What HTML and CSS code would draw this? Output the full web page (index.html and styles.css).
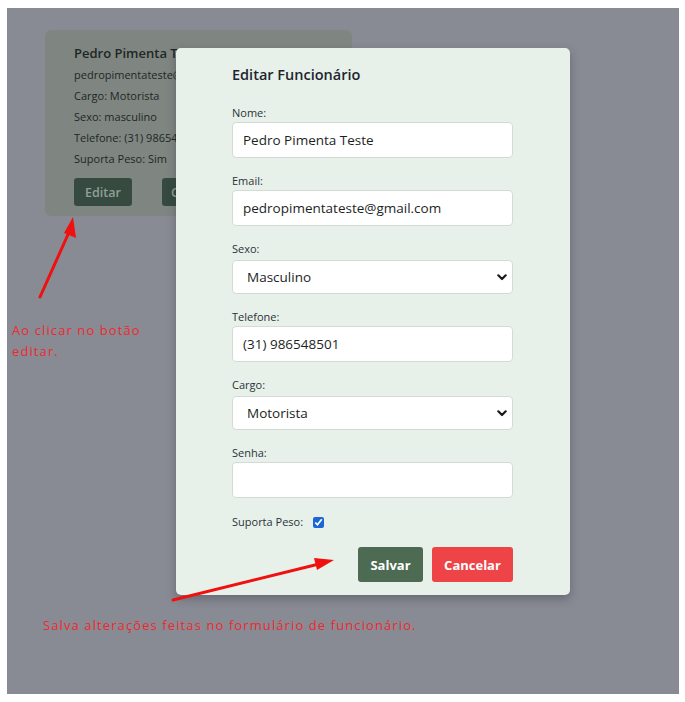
FILE: index.html
```html
<!DOCTYPE html>
<html lang="pt-BR">
<head>
<meta charset="utf-8">
<title>Editar Funcionário</title>
<link rel="stylesheet" href="styles.css">
</head>
<body>
<div class="screen">
  <div class="card">
    <div class="card-name">Pedro Pimenta Teste</div>
    <div class="card-line">pedropimentateste@gmail.com</div>
    <div class="card-line">Cargo: Motorista</div>
    <div class="card-line">Sexo: masculino</div>
    <div class="card-line">Telefone: (31) 986548501</div>
    <div class="card-line">Suporta Peso: Sim</div>
    <div class="card-actions">
      <button class="card-btn">Editar</button>
      <button class="card-btn">Cancelar</button>
    </div>
  </div>

  <div class="modal">
    <h2 class="modal-title">Editar Funcionário</h2>
    <div class="field">
      <label class="field-label">Nome:</label>
      <input class="field-input" type="text" value="Pedro Pimenta Teste">
    </div>
    <div class="field">
      <label class="field-label">Email:</label>
      <input class="field-input" type="text" value="pedropimentateste@gmail.com">
    </div>
    <div class="field">
      <label class="field-label">Sexo:</label>
      <div class="select">
        <span>Masculino</span>
        <svg class="chev" width="10" height="7" viewBox="0 0 10 7"><path d="M1.3 1.3 L5 5 L8.7 1.3" fill="none" stroke="#1a1a1a" stroke-width="2.2" stroke-linecap="round" stroke-linejoin="round"/></svg>
      </div>
    </div>
    <div class="field">
      <label class="field-label">Telefone:</label>
      <input class="field-input" type="text" value="(31) 986548501">
    </div>
    <div class="field">
      <label class="field-label">Cargo:</label>
      <div class="select">
        <span>Motorista</span>
        <svg class="chev" width="10" height="7" viewBox="0 0 10 7"><path d="M1.3 1.3 L5 5 L8.7 1.3" fill="none" stroke="#1a1a1a" stroke-width="2.2" stroke-linecap="round" stroke-linejoin="round"/></svg>
      </div>
    </div>
    <div class="field">
      <label class="field-label">Senha:</label>
      <input class="field-input" type="password" value="">
    </div>
    <div class="check-row">
      <span class="field-label">Suporta Peso:</span>
      <input class="check" type="checkbox" checked>
    </div>
    <div class="actions">
      <button class="btn btn-save">Salvar</button>
      <button class="btn btn-cancel">Cancelar</button>
    </div>
  </div>

  <svg class="arrows" width="672" height="686" viewBox="0 0 672 686">
    <line x1="33" y1="289" x2="63" y2="222" stroke="#f01010" stroke-width="3" stroke-linecap="round"/>
    <polygon points="66,209 69,230 57,225" fill="#f01010"/>
    <line x1="166" y1="592" x2="312" y2="556" stroke="#f01010" stroke-width="3" stroke-linecap="round"/>
    <polygon points="327,552 310,562 307,550" fill="#f01010"/>
  </svg>
  <p class="note note-edit">Ao clicar no botão<br>editar.</p>
  <p class="note note-save">Salva alterações feitas no formulário de funcionário.</p>
</div>
</body>
</html>
```
FILE: styles.css
```css
* { box-sizing: border-box; }
html, body { margin: 0; padding: 0; }
body {
  background: #ffffff;
  padding: 8px 6px 8px 7px;
  font-family: "Open Sans", "Noto Sans", sans-serif;
}
.screen {
  position: relative;
  width: 672px;
  height: 686px;
  background: #888b94;
  padding: 22px 0 0 38px;
  overflow: hidden;
}
.card {
  width: 307px;
  height: 186px;
  background: #7f8682;
  border-radius: 6px;
  padding: 12px 0 0 29px;
  color: #1e2722;
}
.card-name {
  font-size: 13px;
  font-weight: 600;
  line-height: 22px;
}
.card-line {
  font-size: 11px;
  line-height: 21px;
}
.card-actions {
  display: flex;
  gap: 30px;
  margin-top: 9px;
}
.card-btn {
  height: 28px;
  width: 58px;
  border: none;
  border-radius: 3px;
  background: #364a3f;
  color: #8fa096;
  font-family: inherit;
  font-size: 12.5px;
  font-weight: 600;
  padding: 0;
}
.card-btn + .card-btn { width: 80px; text-align: left; padding-left: 9px; }
.modal {
  position: absolute;
  left: 169px;
  top: 40px;
  width: 394px;
  height: 547px;
  background: #e7f1e9;
  border-radius: 5px;
  box-shadow: 0 4px 10px rgba(40, 44, 52, 0.35);
  padding: 16px 57px 13px 56px;
  display: flex;
  flex-direction: column;
}
.modal-title {
  margin: 0 0 19px;
  font-size: 14.5px;
  font-weight: 600;
  line-height: 22px;
  color: #1d2430;
}
.field {
  display: flex;
  flex-direction: column;
  margin-bottom: 15px;
}
.field-label {
  font-size: 11px;
  line-height: 16px;
  color: #2b313a;
  margin-bottom: 1px;
}
.field-input {
  height: 36px;
  width: 281px;
  border: 1px solid #d5dad6;
  border-radius: 4px;
  background: #ffffff;
  padding: 0 10px;
  font-family: inherit;
  font-size: 13.5px;
  color: #1c1f24;
}
.select {
  height: 34px;
  width: 281px;
  margin-top: 2px;
  border: 1px solid #d5dad6;
  border-radius: 4px;
  background: #ffffff;
  padding: 0 5px 0 14px;
  display: flex;
  align-items: center;
  justify-content: space-between;
  font-size: 13.5px;
  color: #1c1f24;
}
.check-row {
  display: flex;
  align-items: center;
  gap: 10px;
  height: 22px;
  margin-top: -2px;
}
.check-row .field-label { margin: 0; }
.check {
  margin: 0;
  width: 11px;
  height: 11px;
  accent-color: #1a66d8;
}
.actions {
  display: flex;
  justify-content: flex-end;
  gap: 9px;
  margin-top: 14px;
}
.btn {
  height: 35px;
  border: none;
  border-radius: 3px;
  color: #ffffff;
  font-family: inherit;
  font-size: 13px;
  font-weight: 700;
  padding: 0;
}
.btn-save { width: 65px; background: #4d6a53; }
.btn-cancel { width: 81px; background: #ee4347; }
.arrows {
  position: absolute;
  left: 0;
  top: 0;
}
.note {
  position: absolute;
  margin: 0;
  color: #f0282e;
  font-size: 13px;
  line-height: 21px;
  letter-spacing: 1.1px;
}
.note-edit { left: 5px; top: 312px; }
.note-save { left: 36px; top: 607px; }
```
